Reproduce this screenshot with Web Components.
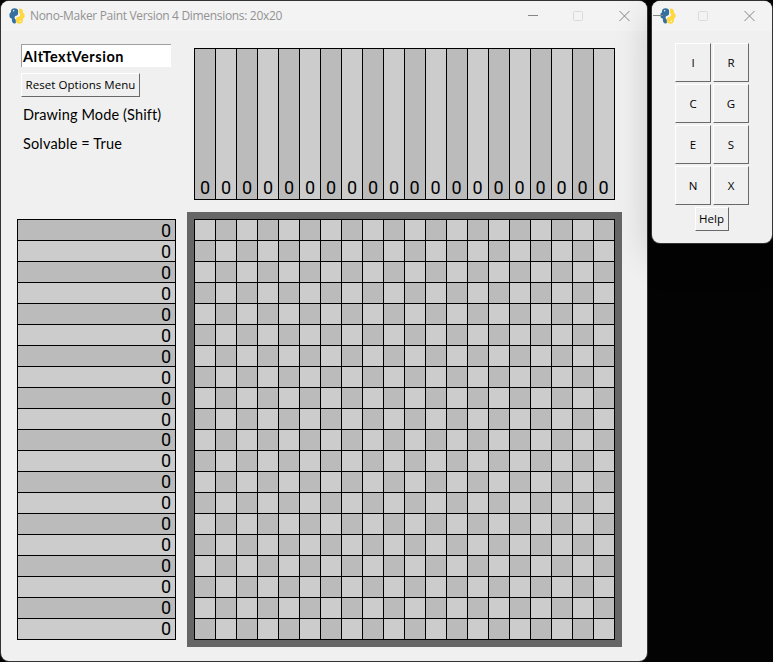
<!DOCTYPE html>
<html lang="en">
<head>
<meta charset="utf-8">
<title>Nono-Maker Paint</title>
<style>
html, body { margin: 0; width: 773px; height: 662px; overflow: hidden; background: #000; }
</style>
</head>
<body>
<nono-desktop></nono-desktop>
<script>
const define = (name, html, setup) => {
  const template = document.createElement('template');
  template.innerHTML = html;
  customElements.define(name, class extends HTMLElement {
    connectedCallback() {
      if (this.shadowRoot) return;
      this.attachShadow({ mode: 'open' }).append(template.content.cloneNode(true));
      if (setup) setup(this, this.shadowRoot);
    }
  });
};

/* One line of text, spaced to the width given in its "w" attribute. */
define('fit-text', `<style>
:host { display: inline-block; white-space: nowrap; }
span { display: inline-block; }
</style><span><slot></slot></span>`, (host, root) => {
  const w = Number(host.getAttribute('w'));
  if (!w) return;
  const span = root.querySelector('span');
  const natural = span.getBoundingClientRect().width;
  host.style.width = w + 'px';
  span.style.letterSpacing = (w - natural) / host.textContent.length + 'px';
});

define('python-icon', `<style>:host { display: block; width: 16px; height: 16px; } svg { display: block; }</style>
<svg width="16" height="16" viewBox="0 0 16 16">
<path fill="#346f9e" d="M5.500.2C3.400.2 2 1.400 2 3v1.300C.9 4.700.4 5.800.4 7.300c0 1.700.7 2.900 1.900 3.200h.6v1.700C2.900 14 4 15.500 5.600 15.500c.7 0 1.200-.3 1.200-.8V12c0-.8-.9-1-1.100-1.800C5.400 8.900 6 8 7.100 7.800c1.300-.3 2-1.200 2-2.500V2.800C9.100 1.200 7.700.2 5.500.2z"/>
<path fill="#ffd83f" d="M10.600.6c2 0 3.300 1 3.300 2.700v1.500c1.200.4 1.700 1.400 1.700 2.900 0 1.600-.7 2.600-1.700 3v1.800c0 2-1.200 3.200-3.500 3.200-2.100 0-3.500-1.100-3.500-2.800v-1.600c0-1.300.8-2.100 2.100-2.400 1.600-.4 2.400-1.300 2.200-2.700-.2-.8-1.200-1-1.200-1.800V1.500c0-.6.100-.9.600-.9z"/>
<circle cx="4.700" cy="2.700" r=".7" fill="#fff"/><circle cx="11.200" cy="13.200" r=".7" fill="#fff"/>
</svg>`);

define('window-buttons', `<style>
:host { display: flex; gap: 35px; }
svg { display: block; fill: none; stroke: #858585; }
</style>
<svg width="11" height="11"><path d="M1 4.500h10"/></svg>
<svg width="11" height="11"><rect x=".5" y=".5" width="9" height="9" rx="1" stroke="#dadada"/></svg>
<svg width="11" height="11"><path d="M.5 0l10 10M10.500 0l-10 10"/></svg>`);

define('app-window', `<style>
:host { display: flex; flex-direction: column; box-sizing: border-box; background: #f0f0f0;
  border-radius: 8px; overflow: hidden; color: #000; }
header { height: 30px; flex: none; display: flex; align-items: center; background: #f3f3f3; }
</style><header><slot name="bar"></slot></header><slot></slot>`);

define('tk-button', `<style>
:host { display: flex; align-items: center; justify-content: center; box-sizing: border-box;
  border: 1px solid; border-color: #fff #696969 #696969 #fff; background: #f0f0f0;
  font: 11.500px "Open Sans", "Noto Sans", sans-serif; line-height: 16px; }
</style><slot></slot>`);

define('clue-columns', `<style>
:host { display: grid; grid-template-columns: repeat(20, 20px); gap: 1px; padding: 1px; background: #000;
  width: 419px; height: 150px; font: 18px Roboto, sans-serif; }
div { display: flex; align-items: flex-end; justify-content: center; line-height: 23px; background: #ccc; }
div:nth-of-type(odd) { background: #bbb; }
div:nth-of-type(n+11) { padding-right: 1px; }
</style>`, (host, root) => {
  for (let i = 0; i < 20; i++) root.append(Object.assign(document.createElement('div'), { textContent: '0' }));
});

define('clue-rows', `<style>
:host { display: grid; grid-template-rows: repeat(20, 20px); gap: 1px; padding: 1px; background: #000;
  width: 157px; font: 18px Roboto, sans-serif; }
div { text-align: right; padding-right: 4px; line-height: 21px; height: 20px; background: #ccc; }
div:nth-of-type(odd) { background: #bbb; }
div:nth-of-type(n+11) { line-height: 19px; }
</style>`, (host, root) => {
  for (let i = 0; i < 20; i++) root.append(Object.assign(document.createElement('div'), { textContent: '0' }));
});

define('paint-grid', `<style>
:host { display: block; padding: 7px; background: #666; }
section { display: grid; grid-template: repeat(20, 20px) / repeat(20, 20px); gap: 1px; padding: 1px; background: #000; }
i { background: #ccc; } i.d { background: #bbb; }
</style><section></section>`, (host, root) => {
  const s = root.querySelector('section');
  for (let n = 0; n < 400; n++) {
    const c = document.createElement('i');
    if ((n % 20 + Math.floor(n / 20)) % 2) c.className = 'd';
    s.append(c);
  }
});

define('option-panel', `<style>
:host { display: flex; flex-direction: column; align-items: flex-start; font: 14px Lato, sans-serif; }
.field { box-sizing: border-box; width: 150px; height: 23px; background: #fff; border-top: 1px solid #a0a0a0;
  border-left: 1px solid #a0a0a0; padding-left: 1px; font-weight: 700; line-height: 23px; font-size: 14.500px; }
tk-button { width: 119px; height: 24px; margin: 6px 0 8px; }
.line { padding-left: 2px; height: 20px; line-height: 20px; font-size: 14.500px; margin-bottom: 9px; }
</style>
<div class="field"><fit-text w="101">AltTextVersion</fit-text></div>
<tk-button><fit-text w="110">Reset Options Menu</fit-text></tk-button>
<div class="line"><fit-text w="138">Drawing Mode (Shift)</fit-text></div>
<div class="line"><fit-text w="99">Solvable = True</fit-text></div>`);

define('key-pad', `<style>
:host { display: flex; flex-direction: column; align-items: center; padding-top: 12px; }
section { display: grid; grid-template: repeat(4, 39px) / 36px 36px; gap: 2px; }
section tk-button { height: 39px; }
.help { width: 34px; height: 24px; margin: 2px 1px 0 0; }
</style>
<section><tk-button>I</tk-button><tk-button>R</tk-button><tk-button>C</tk-button><tk-button>G</tk-button>
<tk-button>E</tk-button><tk-button>S</tk-button><tk-button>N</tk-button><tk-button>X</tk-button></section>
<tk-button class="help"><fit-text w="25">Help</fit-text></tk-button>`);

define('nono-desktop', `<style>
:host { display: block; position: relative; width: 773px; height: 662px; background: #030303; overflow: hidden; }
.main { position: absolute; left: 1px; top: 1px; width: 646px; height: 660px; box-shadow: 0 0 0 1px #333; }
.pad { position: absolute; left: 652px; top: 1px; width: 120px; height: 242px;
  box-shadow: 0 0 0 1px #333, 0 12px 38px rgba(0,0,0,.2); }
.gutter { position: absolute; left: 648px; top: 0; width: 3px; height: 662px; background: #030303; }
.main python-icon { margin: -1px 0 0 8px; }
.title { margin-left: 5px; font: 12px/18px "Open Sans", "Noto Sans", sans-serif; color: #929292; }
.main window-buttons { margin-left: auto; margin-right: 17px; }
.pad python-icon { margin: -1px 0 0 8px; flex: none; }
.pad window-buttons { margin-left: -24px; }
.body { display: grid; grid-template-columns: 159px 435px; grid-template-rows: 151px 435px; column-gap: 11px; row-gap: 13px;
  padding: 17px 0 0 16px; align-items: start; }
option-panel { padding-left: 4px; margin-top: -4px; }
clue-columns { margin-left: 7px; }
clue-rows { margin-top: 7px; }
</style>
<app-window class="main">
  <python-icon slot="bar"></python-icon>
  <fit-text class="title" slot="bar" w="252">Nono-Maker Paint Version 4 Dimensions: 20x20</fit-text>
  <window-buttons slot="bar"></window-buttons>
  <div class="body"><option-panel></option-panel><clue-columns></clue-columns><clue-rows></clue-rows><paint-grid></paint-grid></div>
</app-window>
<div class="gutter"></div>
<app-window class="pad">
  <python-icon slot="bar"></python-icon>
  <window-buttons slot="bar"></window-buttons>
  <key-pad></key-pad>
</app-window>`);
</script>
</body>
</html>
